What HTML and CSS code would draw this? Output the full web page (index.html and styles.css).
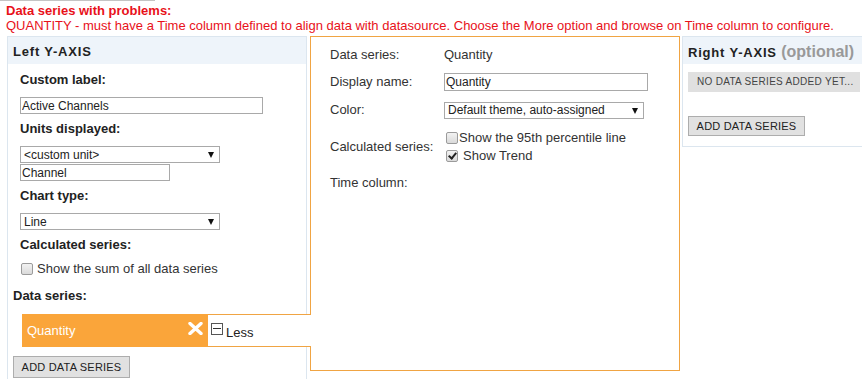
FILE: index.html
```html
<!DOCTYPE html>
<html lang="en">

<head>
    <meta charset="UTF-8">
    <meta name="viewport" content="width=device-width, initial-scale=1.0">
    <title>Chart data series</title>
    <link rel="stylesheet" href="styles.css">
</head>

<body>
    <div class="source-stub"></div>
    <div class="problems">
        <div class="problems-title">Data series with problems:</div>
        <div>QUANTITY - must have a Time column defined to align data with datasource. Choose the More option and browse on Time column to configure.</div>
    </div>

    <div class="axes">
        <div class="axis axis-left">
            <div class="axis-head">Left Y-AXIS</div>
            <div class="axis-body">
                <div class="field">
                    <div class="field-label">Custom label:</div>
                    <input type="text" class="text-input label-input" value="Active Channels">
                </div>
                <div class="field">
                    <div class="field-label">Units displayed:</div>
                    <span class="select unit-select"><select><option>&lt;custom unit&gt;</option></select></span>
                    <input type="text" class="text-input unit-input" value="Channel">
                </div>
                <div class="field">
                    <div class="field-label">Chart type:</div>
                    <span class="select unit-select"><select><option>Line</option></select></span>
                </div>
                <div class="field field-calc">
                    <div class="field-label">Calculated series:</div>
                    <label class="check check-sum"><input type="checkbox" class="check-box">Show the sum of all data series</label>
                </div>

                <div class="series-label">Data series:</div>
                <div class="series-item">
                    <div class="series-chip">
                        <span>Quantity</span>
                        <svg class="chip-remove" width="15" height="13" viewBox="0 0 15 13">
                            <path d="M2 1.5 L13 11.5 M13 1.5 L2 11.5" stroke="#fff" stroke-width="3.4" stroke-linecap="round" />
                        </svg>
                    </div>
                    <div class="series-less">
                        <span class="minus-box"></span>
                        <span class="less-text">Less</span>
                    </div>
                </div>
                <button class="btn btn-add-left">ADD DATA SERIES</button>
            </div>
        </div>

        <div class="series-detail">
            <div>Data series:</div>
            <div>Quantity</div>

            <div>Display name:</div>
            <div><input type="text" class="text-input name-input" value="Quantity"></div>

            <div>Color:</div>
            <div><span class="select color-select"><select><option>Default theme, auto-assigned</option></select></span></div>

            <div>Calculated series:</div>
            <div class="check-list">
                <label class="check check-tight"><input type="checkbox" class="check-box">Show the 95th percentile line</label>
                <label class="check check-trend"><input type="checkbox" class="check-box" checked>Show Trend</label>
            </div>

            <div>Time column:</div>
            <div></div>
        </div>

        <div class="axis axis-right">
            <div class="axis-head">Right Y-AXIS <span class="optional">(optional)</span></div>
            <div class="axis-body">
                <div class="empty-note">NO DATA SERIES ADDED YET...</div>
                <button class="btn btn-add-right">ADD DATA SERIES</button>
            </div>
        </div>
    </div>
</body>

</html>
```

FILE: styles.css
```css
html,
body {
    margin: 0;
    overflow: hidden;
}

body {
    font-family: "Liberation Sans", Arial, sans-serif;
    font-size: 13px;
    color: #222;
    background: #fff;
}

.source-stub {
    width: 155px;
    height: 1px;
    background: #c4c4c4;
}

.problems {
    color: #e8111a;
    line-height: 15px;
    padding: 2px 0 0 6px;
}

.problems-title {
    font-weight: bold;
}

.axes {
    display: flex;
    align-items: flex-start;
    margin-top: 3px;
    padding-left: 7px;
}

.axes > * {
    flex-shrink: 0;
}

/* axis panels */
.axis {
    box-sizing: border-box;
    border: 1px solid #dce6ef;
}

.axis-left {
    width: 300px;
    height: 360px;
}

.axis-right {
    width: 184px;
    margin-left: 2px;
}

.axis-head {
    height: 16px;
    padding: 7px 5px 4px;
    background: #eef4fa;
    font-weight: bold;
    line-height: 16px;
    letter-spacing: 0.8px;
    color: #222;
    white-space: nowrap;
}

.optional {
    font-size: 16px;
    letter-spacing: 0;
    color: #999;
}

.axis-left .axis-body {
    padding: 8px 0 0 5px;
}

.axis-right .axis-body {
    padding: 8px 5px 10px;
}

.field {
    margin: 0 0 7px 7px;
}

.field-calc {
    margin-bottom: 12px;
}

.field-label {
    font-weight: bold;
    line-height: 16px;
    margin-bottom: 9px;
}

/* form controls */
.text-input {
    display: block;
    box-sizing: border-box;
    height: 17px;
    margin: 0;
    padding: 0 1px;
    border: 1px solid #a9a9a9;
    font: 12px "Liberation Sans", Arial, sans-serif;
    color: #222;
}

.label-input {
    width: 243px;
}

.unit-input {
    width: 150px;
    margin-top: 1px;
}

.name-input {
    width: 204px;
    height: 18px;
}

.select {
    display: block;
    position: relative;
    width: 200px;
    height: 17px;
}

.select select {
    appearance: none;
    box-sizing: border-box;
    width: 100%;
    height: 100%;
    margin: 0;
    padding: 0 0 0 3px;
    border: 1px solid #a9a9a9;
    border-radius: 0;
    background: #fff;
    font: 12px "Liberation Sans", Arial, sans-serif;
    color: #222;
}

.select::after {
    content: "";
    position: absolute;
    right: 6px;
    top: 6px;
    border-left: 3.5px solid transparent;
    border-right: 3.5px solid transparent;
    border-top: 6px solid #111;
}

.check {
    display: flex;
    align-items: center;
    color: #333;
}

.check-sum {
    gap: 4px;
    line-height: 14px;
    margin-left: 1px;
}

.check-box {
    appearance: none;
    position: relative;
    box-sizing: border-box;
    width: 12px;
    height: 12px;
    margin: 0;
    border: 1px solid #9b9b9b;
    border-radius: 2px;
    background: linear-gradient(#f2f2f2, #dadada);
}

.check-box:checked::after {
    content: "";
    position: absolute;
    left: 3px;
    top: 0;
    width: 3px;
    height: 6px;
    border: solid #222;
    border-width: 0 2px 2px 0;
    transform: rotate(40deg);
}

/* selected data series */
.series-label {
    font-weight: bold;
    line-height: 16px;
    margin-bottom: 10px;
}

.series-item {
    position: relative;
    z-index: 1;
    display: flex;
    height: 33px;
    margin: 0 -5px 0 9px;
}

.series-chip {
    box-sizing: border-box;
    width: 186px;
    padding: 0 5px;
    display: flex;
    align-items: center;
    justify-content: space-between;
    background: #faa53a;
    color: #fff;
    line-height: 16px;
}

.chip-remove {
    margin-bottom: 4px;
}

.series-less {
    flex: 1;
    display: flex;
    align-items: flex-start;
    gap: 3px;
    padding: 8px 0 0 3px;
    background: #fff;
    border-top: 1px solid #f0a443;
    border-bottom: 1px solid #f0a443;
}

.minus-box {
    position: relative;
    box-sizing: border-box;
    width: 12px;
    height: 12px;
    border: 1px solid #555;
    background: #fff;
}

.minus-box::before {
    content: "";
    position: absolute;
    left: 1px;
    right: 1px;
    top: 4px;
    height: 1px;
    background: #333;
}

.less-text {
    margin-top: 2px;
    line-height: 16px;
}

.btn {
    display: block;
    box-sizing: border-box;
    width: 117px;
    height: 21px;
    margin: 0;
    padding: 0;
    border: 1px solid #adadad;
    background: #e1e1e1;
    font: 11px "Liberation Sans", Arial, sans-serif;
    letter-spacing: 0.2px;
    text-align: center;
    color: #222;
}

.btn-add-left {
    margin-top: 9px;
    height: 22px;
}

.btn-add-right {
    margin-top: 24px;
    height: 20px;
}

/* series detail box */
.series-detail {
    box-sizing: border-box;
    width: 370px;
    height: 335px;
    margin-left: 3px;
    padding: 10px 0 0 19px;
    border: 1px solid #f0a443;
    display: grid;
    grid-template-columns: 114px 1fr;
    grid-template-rows: 16px 18px 18px 36px 16px;
    row-gap: 10px;
    align-content: start;
    align-items: center;
    color: #333;
    line-height: 16px;
}

.color-select {
    width: 200px;
}

.check-list {
    display: flex;
    flex-direction: column;
    line-height: 18px;
}

.check-list .check-box {
    margin-left: 2px;
}

.check-tight {
    gap: 1px;
}

.check-trend {
    gap: 5px;
}

.empty-note {
    height: 20px;
    padding-left: 9px;
    background: #e0e0e0;
    color: #444;
    font-size: 10px;
    letter-spacing: 0.3px;
    line-height: 20px;
    white-space: nowrap;
    overflow: hidden;
}
```
